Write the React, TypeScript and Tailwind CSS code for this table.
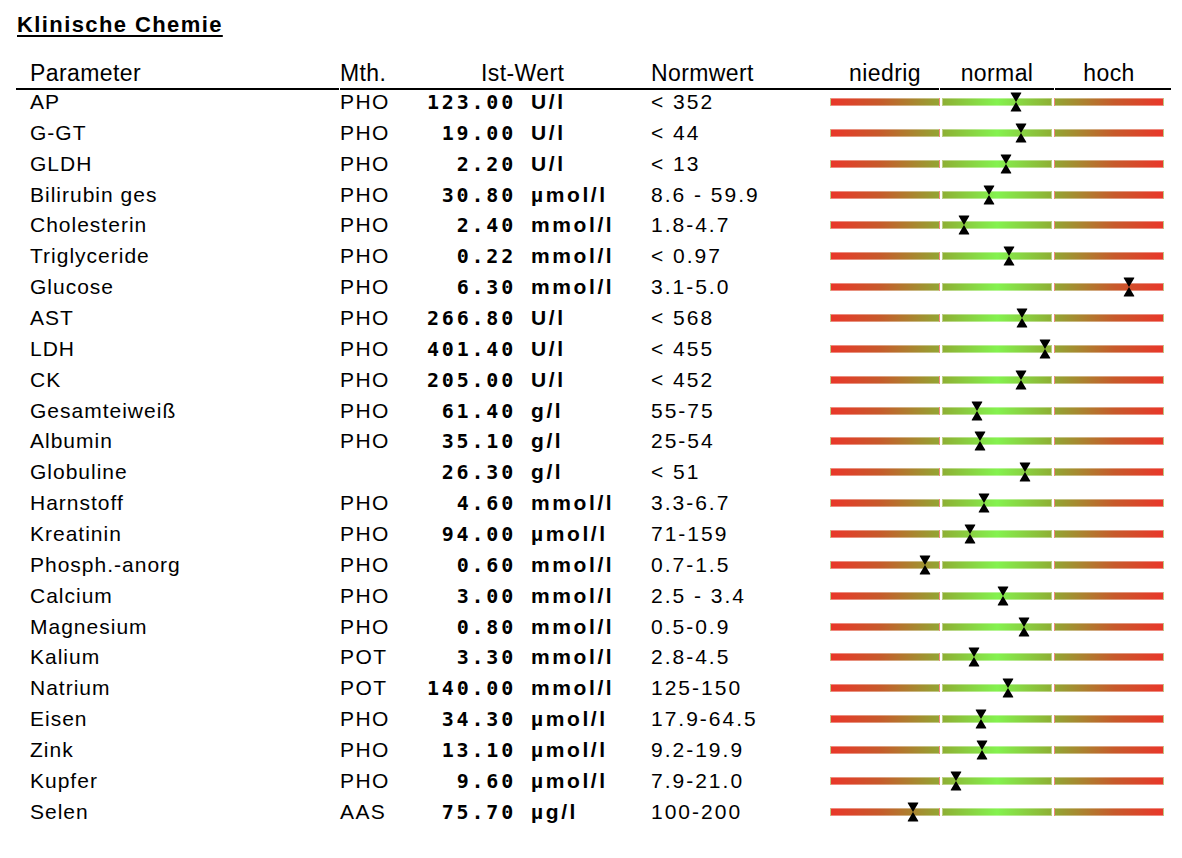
import React from "react";

type Row = {
  name: string;
  mth: string;
  val: string;
  unit: string;
  norm: string;
  pos: number; // marker center, px from bar start
};

const rows: Row[] = [
  { name: "AP", mth: "PHO", val: "123.00", unit: "U/l", norm: "< 352", pos: 186 },
  { name: "G-GT", mth: "PHO", val: "19.00", unit: "U/l", norm: "< 44", pos: 191 },
  { name: "GLDH", mth: "PHO", val: "2.20", unit: "U/l", norm: "< 13", pos: 176 },
  { name: "Bilirubin ges", mth: "PHO", val: "30.80", unit: "µmol/l", norm: "8.6 - 59.9", pos: 159 },
  { name: "Cholesterin", mth: "PHO", val: "2.40", unit: "mmol/l", norm: "1.8-4.7", pos: 134 },
  { name: "Triglyceride", mth: "PHO", val: "0.22", unit: "mmol/l", norm: "< 0.97", pos: 179 },
  { name: "Glucose", mth: "PHO", val: "6.30", unit: "mmol/l", norm: "3.1-5.0", pos: 299 },
  { name: "AST", mth: "PHO", val: "266.80", unit: "U/l", norm: "< 568", pos: 192 },
  { name: "LDH", mth: "PHO", val: "401.40", unit: "U/l", norm: "< 455", pos: 215 },
  { name: "CK", mth: "PHO", val: "205.00", unit: "U/l", norm: "< 452", pos: 191 },
  { name: "Gesamteiweiß", mth: "PHO", val: "61.40", unit: "g/l", norm: "55-75", pos: 147 },
  { name: "Albumin", mth: "PHO", val: "35.10", unit: "g/l", norm: "25-54", pos: 150 },
  { name: "Globuline", mth: "", val: "26.30", unit: "g/l", norm: "< 51", pos: 195 },
  { name: "Harnstoff", mth: "PHO", val: "4.60", unit: "mmol/l", norm: "3.3-6.7", pos: 154 },
  { name: "Kreatinin", mth: "PHO", val: "94.00", unit: "µmol/l", norm: "71-159", pos: 140 },
  { name: "Phosph.-anorg", mth: "PHO", val: "0.60", unit: "mmol/l", norm: "0.7-1.5", pos: 95 },
  { name: "Calcium", mth: "PHO", val: "3.00", unit: "mmol/l", norm: "2.5 - 3.4", pos: 173 },
  { name: "Magnesium", mth: "PHO", val: "0.80", unit: "mmol/l", norm: "0.5-0.9", pos: 194 },
  { name: "Kalium", mth: "POT", val: "3.30", unit: "mmol/l", norm: "2.8-4.5", pos: 144 },
  { name: "Natrium", mth: "POT", val: "140.00", unit: "mmol/l", norm: "125-150", pos: 178 },
  { name: "Eisen", mth: "PHO", val: "34.30", unit: "µmol/l", norm: "17.9-64.5", pos: 151 },
  { name: "Zink", mth: "PHO", val: "13.10", unit: "µmol/l", norm: "9.2-19.9", pos: 152 },
  { name: "Kupfer", mth: "PHO", val: "9.60", unit: "µmol/l", norm: "7.9-21.0", pos: 126 },
  { name: "Selen", mth: "AAS", val: "75.70", unit: "µg/l", norm: "100-200", pos: 83 },
];

function Marker({ pos }: { pos: number }) {
  return (
    <svg
      width="12"
      height="20"
      viewBox="0 0 12 20"
      className="absolute top-[-6px]"
      style={{ left: pos - 6 }}
    >
      <path d="M1 0.5 H11 Q11.6 0.5 11.2 1.3 L6 10 L11.2 18.7 Q11.6 19.5 11 19.5 H1 Q0.4 19.5 0.8 18.7 L6 10 L0.8 1.3 Q0.4 0.5 1 0.5 Z" fill="#000" />
    </svg>
  );
}

function Bar({ pos }: { pos: number }) {
  return (
    <div className="relative flex gap-[2px] w-[334px] h-[8px] mt-[8px]">
      <div className="w-[110px] h-[8px] border border-white/40 bg-[linear-gradient(to_right,#e9372a,#c75a2b_45%,#93a533)]" />
      <div className="w-[110px] h-[8px] border border-white/40 bg-[linear-gradient(to_right,#8eb034,#84f24f_50%,#8eb034)]" />
      <div className="w-[110px] h-[8px] border border-white/40 bg-[linear-gradient(to_right,#93a533,#c75a2b_55%,#e9372a)]" />
      <Marker pos={pos} />
    </div>
  );
}

export default function App() {
  return (
    <div className="w-[1182px] h-[858px] bg-white text-black font-['Liberation_Sans',Arial,sans-serif] overflow-hidden">
      <div className="pt-[12px] pl-[17px]">
        <div className="h-[26px] leading-[26px] text-[22px] font-bold tracking-[1.4px] underline decoration-2 underline-offset-[3px]">
          Klinische Chemie
        </div>
      </div>

      <div className="mt-[22px] ml-[16px] w-[1155px]">
        {/* header */}
        <div className="flex h-[28px] text-[23px] leading-[27px] tracking-[0.4px]">
          <div className="w-[324px] pl-[14px]">Parameter</div>
          <div className="w-[80px]">Mth.</div>
          <div className="w-[231px] pl-[61px]">Ist-Wert</div>
          <div className="w-[179px]">Normwert</div>
          <div className="w-[110px] text-center">niedrig</div>
          <div className="w-[2px]" />
          <div className="w-[110px] text-center">normal</div>
          <div className="w-[2px]" />
          <div className="w-[110px] text-center">hoch</div>
        </div>
        <div className="flex gap-px h-[2px]">
          <div className="w-[323px] bg-black" />
          <div className="w-[599px] bg-black" />
          <div className="w-[114px] bg-black" />
          <div className="w-[116px] bg-black" />
        </div>

        {/* rows */}
        <div className="flex flex-col">
          {rows.map((r) => (
            <div key={r.name} className="flex h-[30.87px] text-[21px] leading-[24px]">
              <div className="w-[324px] pl-[14px] tracking-[1px]">{r.name}</div>
              <div className="w-[80px] tracking-[1.4px]">{r.mth}</div>
              <div className="w-[96px] text-right font-['DejaVu_Sans_Mono',monospace] font-bold text-[20px] tracking-[2.8px]">
                {r.val}
              </div>
              <div className="w-[135px] pl-[15px] font-bold text-[21px] tracking-[2.6px]">{r.unit}</div>
              <div className="w-[179px] tracking-[2px]">{r.norm}</div>
              <div className="w-[334px]">
                <Bar pos={r.pos} />
              </div>
            </div>
          ))}
        </div>
      </div>
    </div>
  );
}
